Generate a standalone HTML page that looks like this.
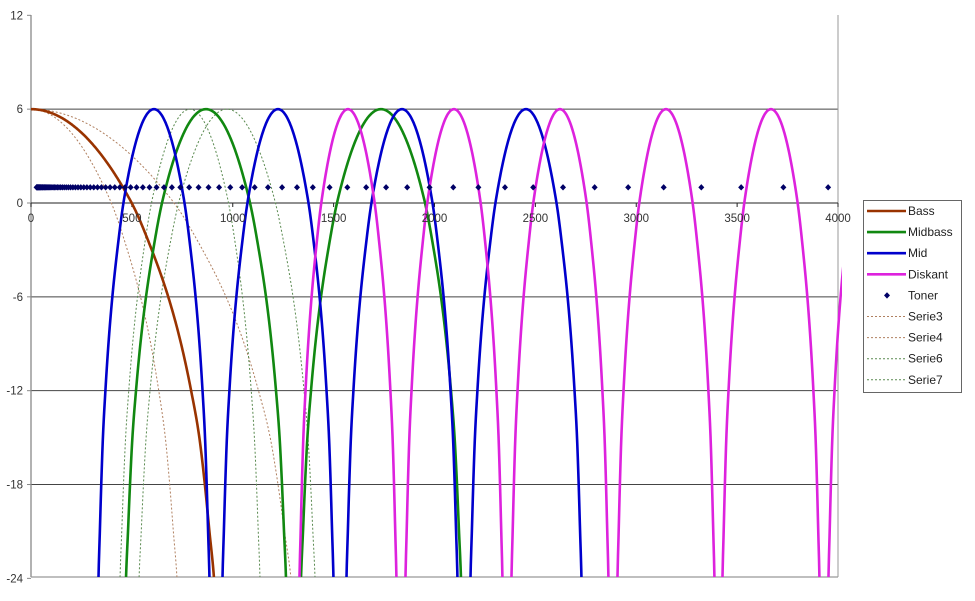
<!DOCTYPE html>
<html><head><meta charset="utf-8"><style>
html,body{margin:0;padding:0;background:#fff;overflow:hidden;width:975px;height:601px;}
svg{display:block;font-family:"Liberation Sans",Arial,sans-serif;overflow:hidden;}
</style></head><body>
<svg id="c" width="975" height="601" viewBox="0 0 975 601" xmlns="http://www.w3.org/2000/svg">
<defs><clipPath id="pc"><rect x="31" y="14" width="811" height="563"/></clipPath></defs>
<g id="grid"></g>
<g id="curves" clip-path="url(#pc)"></g>
<g id="labels" font-size="11.5" fill="#333"></g>
<g id="legend"></g>
</svg>
<script>
var NS="http://www.w3.org/2000/svg";
function el(t,a,p,txt){var e=document.createElementNS(NS,t);for(var k in a)e.setAttribute(k,a[k]);if(txt!=null)e.textContent=txt;(p||document.getElementById('c')).appendChild(e);return e;}
function X(f){return 31+f*0.20175;}
function Y(d){return 203-d*15.64;}
var grid=document.getElementById('grid'),lab=document.getElementById('labels');
[6,-6,-12,-18].forEach(function(d){el('line',{x1:31,x2:838,y1:Y(d),y2:Y(d),stroke:'#444','stroke-width':1},grid);});
el('line',{x1:31,x2:31,y1:15,y2:577,stroke:'#888','stroke-width':1.3},grid);
el('line',{x1:31,x2:838,y1:577,y2:577,stroke:'#999','stroke-width':1.3},grid);
el('line',{x1:838,x2:838,y1:15,y2:577,stroke:'#999','stroke-width':1},grid);
el('line',{x1:31,x2:838,y1:203,y2:203,stroke:'#222','stroke-width':1},grid);
[12,6,0,-6,-12,-18,-24].forEach(function(d){
 el('line',{x1:27,x2:31,y1:Y(d),y2:Y(d),stroke:'#888'},grid);
 el('text',{x:23,y:Y(d)+4,'text-anchor':'end'},lab,String(d));
});
for(var f=0;f<=4000;f+=500){
 el('line',{x1:X(f),x2:X(f),y1:203,y2:207,stroke:'#222'},grid);
 el('text',{x:X(f),y:222,'text-anchor':'middle'},lab,String(f));
}
var U=[0.55,0.65,0.75,0.82,0.875,0.92,0.95,0.975,1,1.05];
var D=[6,8.7,12,15,18,21,24,27,30,40];
var M=[];
for(var i=0;i<U.length;i++){
 if(i==0)M.push(19.8*2*0.55);
 else if(i==U.length-1)M.push((D[i]-D[i-1])/(U[i]-U[i-1]));
 else M.push(0.5*((D[i]-D[i-1])/(U[i]-U[i-1])+(D[i+1]-D[i])/(U[i+1]-U[i])));
}
function drop(u){u=Math.abs(u);
 if(u<=0.55)return 19.8*u*u;
 if(u>=1.05)return 40+(u-1.05)*200;
 for(var i=1;i<U.length;i++){if(u<=U[i]){var h=U[i]-U[i-1],t=(u-U[i-1])/h,t2=t*t,t3=t2*t;
  return (2*t3-3*t2+1)*D[i-1]+(t3-2*t2+t)*h*M[i-1]+(-2*t3+3*t2)*D[i]+(t3-t2)*h*M[i];}}
 return 40;}
var cv=document.getElementById('curves');
function bump(px,W,col,w,dash){
 var pts=[];for(var x=Math.max(px-W*1.03,28);x<=Math.min(px+W*1.03,845);x+=0.5){pts.push(x.toFixed(1)+','+Y(6-drop((x-px)/W)).toFixed(1));}
 var a={points:pts.join(' '),fill:'none',stroke:col,'stroke-width':w,'stroke-linejoin':'round'};
 if(dash)a['stroke-dasharray']=dash;
 el('polyline',a,cv);
}
bump(31,146,'#b08060',1,'2,2');
bump(31,260,'#b08060',1,'2,2');
bump(190,70,'#5a8a50',1,'2,2');
bump(227,88,'#5a8a50',1,'2,2');
bump(31,183,'#993300',2.6);
[206,381].forEach(function(p){bump(p,80,'#118811',2.6);});
[154,278,402,526].forEach(function(p){bump(p,55.5,'#0000cc',2.6);});
[348,454,560,666,771,877].forEach(function(p){bump(p,48.5,'#dd22dd',2.6);});
for(var n=1;n<=87;n++){var fr=440*Math.pow(2,(n-49)/12);var x=X(fr),y=Y(1);
 el('polygon',{points:(x)+','+(y-3.2)+' '+(x+3)+','+y+' '+x+','+(y+3.2)+' '+(x-3)+','+y,fill:'#000066'},cv);}
var lg=document.getElementById('legend');
el('rect',{x:863.5,y:200.5,width:98,height:192,fill:'#fff',stroke:'#666','stroke-width':1},lg);
var items=[['Bass','#993300',0],['Midbass','#118811',0],['Mid','#0000cc',0],['Diskant','#dd22dd',0],['Toner','#000066',2],['Serie3','#b08060',1],['Serie4','#b08060',1],['Serie6','#5a8a50',1],['Serie7','#5a8a50',1]];
items.forEach(function(it,i){var y=211+i*21.1;
 if(it[2]==0)el('line',{x1:867,x2:906,y1:y,y2:y,stroke:it[1],'stroke-width':2.6},lg);
 else if(it[2]==1)el('line',{x1:867,x2:906,y1:y,y2:y,stroke:it[1],'stroke-width':1,'stroke-dasharray':'2,2'},lg);
 else el('polygon',{points:'887,'+(y-3.2)+' 890,'+y+' 887,'+(y+3.2)+' 884,'+y,fill:it[1]},lg);
 el('text',{x:908,y:y+4,'font-size':12,fill:'#222'},lg,it[0]);
});
</script>
</body></html>
